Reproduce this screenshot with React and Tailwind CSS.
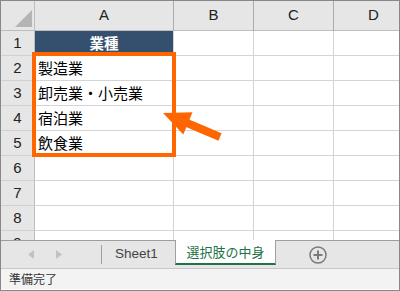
import React from "react";

const columns = ["A", "B", "C", "D"];
const colWidths = ["w-[139px]", "w-[80px]", "w-[80px]", "w-[80px]"];

const rows = [
  { n: 1, a: "業種", head: true },
  { n: 2, a: "製造業" },
  { n: 3, a: "卸売業・小売業" },
  { n: 4, a: "宿泊業" },
  { n: 5, a: "飲食業" },
  { n: 6, a: "" },
  { n: 7, a: "" },
  { n: 8, a: "" },
  { n: 9, a: "" },
];

const jp = "font-['Noto_Sans_CJK_JP',sans-serif]";
const latin = "font-['Liberation_Sans','Noto_Sans_CJK_JP',sans-serif]";

function Corner() {
  return (
    <div className="flex h-[30px] w-[34px] shrink-0 items-end justify-end border-r border-b border-[#bdbdbd] bg-[#e6e6e6] pr-[2px] pb-[3px]">
      <svg width="17" height="17" viewBox="0 0 17 17">
        <polygon points="0,17 17,0 17,17" fill="#b4b4b4" />
      </svg>
    </div>
  );
}

function Row({ row }) {
  return (
    <div className="flex h-[25px] shrink-0">
      <div
        className={`flex h-full w-[34px] shrink-0 items-center justify-center border-r border-b border-r-[#bdbdbd] border-b-[#d0d0d0] bg-[#e6e6e6] text-[15px] text-[#222] ${latin}`}
      >
        {row.n}
      </div>
      <div
        className={`flex h-full w-[139px] shrink-0 items-center border-r border-b border-[#d4d4d4] ${
          row.head
            ? "justify-center bg-[#35506f] text-[14.5px] font-bold text-white"
            : "pl-[3px] pb-[2px] text-[15px] text-black"
        } ${jp} leading-none`}
      >
        {row.a}
      </div>
      <div className="h-full w-[80px] shrink-0 border-r border-b border-[#d4d4d4]" />
      <div className="h-full w-[80px] shrink-0 border-r border-b border-[#d4d4d4]" />
      <div className="h-full w-[80px] shrink-0 border-r border-b border-[#d4d4d4]" />
    </div>
  );
}

function Grid() {
  return (
    <div className="relative h-[239px] overflow-hidden bg-white">
      <div className="flex w-max">
        <Corner />
        {columns.map((c, i) => (
          <div
            key={c}
            className={`flex h-[30px] ${colWidths[i]} shrink-0 items-center justify-center border-r border-b border-r-[#ababab] border-b-[#bdbdbd] bg-[#e6e6e6] text-[15px] text-[#222] ${latin}`}
          >
            {c}
          </div>
        ))}
      </div>
      <div className="flex w-max flex-col">
        {rows.map((r) => (
          <Row key={r.n} row={r} />
        ))}
      </div>

      {/* selection highlight */}
      <div className="pointer-events-none absolute left-[31px] top-[51px] h-[105px] w-[144px] border-4 border-[#ff6600]" />

      {/* arrow */}
      <svg
        className="pointer-events-none absolute left-0 top-0"
        width="398"
        height="239"
        viewBox="1 1 398 239"
      >
        <line x1="187" y1="123" x2="220" y2="137" stroke="#ff6600" strokeWidth="8" />
        <polygon points="163,113 192.5,112.2 183.3,134.4" fill="#ff6600" />
      </svg>
    </div>
  );
}

function TabBar() {
  return (
    <div className="flex h-[28px] items-start border-t border-[#9e9e9e] bg-[#e6e6e6]">
      <div className="flex h-[27px] w-[100px] shrink-0 items-center">
        <svg width="6" height="9" viewBox="0 0 6 9" className="ml-[27px]">
          <polygon points="6,0 0,4.5 6,9" fill="#c2c2c2" />
        </svg>
        <svg width="6" height="9" viewBox="0 0 6 9" className="ml-[22px]">
          <polygon points="0,0 6,4.5 0,9" fill="#c2c2c2" />
        </svg>
      </div>
      <div className="mt-[4px] h-[19px] w-px shrink-0 bg-[#a0a0a0]" />
      <div className={`flex h-[27px] w-[73px] shrink-0 items-center pl-[13px] text-[13.5px] text-[#444] ${latin}`}>
        Sheet1
      </div>
      <div
        className={`-mt-px flex h-[25px] w-[101px] shrink-0 items-center justify-center border-x border-b-2 border-x-[#a0a0a0] border-b-[#217346] bg-white text-[13px] leading-none text-[#217346] ${jp}`}
      >
        選択肢の中身
      </div>
      <div className="ml-[33px] flex h-[27px] items-center">
        <svg width="18" height="18" viewBox="0 0 18 18">
          <circle cx="9" cy="9" r="8" fill="none" stroke="#7a7a7a" strokeWidth="1.5" />
          <path d="M9 4.5v9M4.5 9h9" stroke="#7a7a7a" strokeWidth="2" />
        </svg>
      </div>
    </div>
  );
}

export default function App() {
  return (
    <div className="h-[291px] w-[400px] overflow-hidden border border-[#888] bg-white">
      <Grid />
      <TabBar />
      <div className={`flex h-[21px] items-center border-t border-[#c6c6c6] bg-[#f3f3f3] pl-[8px] text-[12px] leading-none text-[#333] ${jp}`}>
        準備完了
      </div>
    </div>
  );
}
